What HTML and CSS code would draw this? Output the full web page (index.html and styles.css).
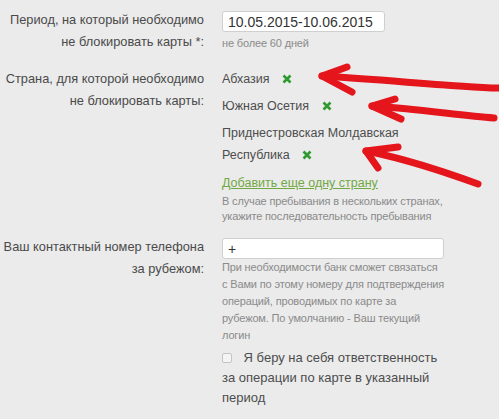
FILE: index.html
```html
<!DOCTYPE html>
<html lang="ru">
<head>
    <meta charset="UTF-8">
    <meta name="viewport" content="width=device-width, initial-scale=1.0">
    <title>Настройки блокировки карты</title>
    <link rel="stylesheet" href="styles.css">
</head>
<body>

    <main class="form">
        <!-- Period -->
        <div class="row row-period">
            <div class="label">Период, на который необходимо<br>не блокировать карты *:</div>
            <div class="field">
                <input class="text-input period-input" type="text" value="10.05.2015-10.06.2015">
                <div class="hint hint-short">не более 60 дней</div>
            </div>
        </div>

        <!-- Countries -->
        <div class="row row-countries">
            <div class="label">Страна, для которой необходимо<br>не блокировать карты:</div>
            <div class="field">
                <div class="country">Абхазия <span class="remove"><svg width="10" height="10" viewBox="0 0 10 10"><path d="M1.5 1.5 L8.5 8.5 M8.5 1.5 L1.5 8.5"/></svg></span></div>
                <div class="country">Южная Осетия <span class="remove"><svg width="10" height="10" viewBox="0 0 10 10"><path d="M1.5 1.5 L8.5 8.5 M8.5 1.5 L1.5 8.5"/></svg></span></div>
                <div class="country">Приднестровская Молдавская Республика <span class="remove"><svg width="10" height="10" viewBox="0 0 10 10"><path d="M1.5 1.5 L8.5 8.5 M8.5 1.5 L1.5 8.5"/></svg></span></div>
                <a class="add-link" href="#">Добавить еще одну страну</a>
                <div class="hint hint-countries">В случае пребывания в нескольких странах, укажите последовательность пребывания</div>
            </div>
        </div>

        <!-- Phone -->
        <div class="row row-phone">
            <div class="label">Ваш контактный номер телефона<br>за рубежом:</div>
            <div class="field">
                <input class="text-input phone-input" type="text" value="+">
                <div class="hint hint-phone">При необходимости банк сможет связаться с&nbsp;Вами по этому номеру для подтверждения операций, проводимых по карте за рубежом.&nbsp;По умолчанию - Ваш текущий логин</div>
            </div>
        </div>

        <!-- Agreement -->
        <div class="row row-agree">
            <div class="label"></div>
            <div class="field">
                <label class="agree"><input class="check" type="checkbox"> Я беру на себя ответственность за операции по карте в указанный период</label>
            </div>
        </div>
    </main>

    <!-- Red marker arrows drawn over the form -->
    <svg class="arrows" width="499" height="419" viewBox="0 0 499 419">
        <path d="M498 88 C 455 87, 390 80, 322 76"/>
        <path d="M347 67 L 322 76 L 352 92"/>
        <path d="M494 118 C 462 116, 420 109, 372 106"/>
        <path d="M395 99 L 372 106 L 401 119"/>
        <path d="M478 184 C 445 172, 402 158, 366 151"/>
        <path d="M398 147 L 366 151 L 378 168"/>
    </svg>

</body>
</html>
```

FILE: styles.css
```css
/* General Body Styling */
body {
    font-family: "Liberation Sans", Arial, sans-serif;
    background-color: #ebebeb;
    color: #4a4a4a;
    margin: 0;
    position: relative;
    width: 499px;
    height: 419px;
    overflow: hidden;
}

.form {
    padding-top: 9px;
}

/* Form rows */
.row {
    display: grid;
    grid-template-columns: 204px 230px;
    column-gap: 18px;
    margin-bottom: 12px;
}

.row-period {
    margin-bottom: 15px;
}

.row-phone {
    margin-bottom: 4px;
}

.label {
    text-align: right;
    font-size: 12.8px;
    line-height: 22px;
    color: #4a4a4a;
}

/* Inputs */
.text-input {
    display: block;
    box-sizing: border-box;
    height: 21px;
    margin: 2px 0 0;
    padding: 0 5px;
    border: 1px solid #cfcfcf;
    border-radius: 3px;
    background-color: #fff;
    font-family: "Liberation Sans", Arial, sans-serif;
    font-size: 14px;
    color: #333;
}

.period-input {
    width: 163px;
}

.phone-input {
    width: 222px;
}

/* Hints */
.hint {
    font-size: 11px;
    letter-spacing: -0.15px;
    color: #8a8a8a;
}

.hint-short {
    margin-top: 3px;
    line-height: 16px;
}

.hint-countries {
    line-height: 15px;
}

.hint-phone {
    max-width: 226px;
    line-height: 17px;
}

/* Countries */
.country {
    max-width: 190px;
    font-size: 12.5px;
    line-height: 22px;
    margin-bottom: 4px;
    color: #4d4d4d;
}

.remove {
    display: inline-block;
    margin-left: 9px;
    vertical-align: -1px;
}

.remove svg path {
    stroke: #2f9a2f;
    stroke-width: 2.6;
    fill: none;
}

.add-link {
    display: block;
    margin-top: 5px;
    font-size: 12.5px;
    line-height: 22px;
    color: #72a843;
    text-decoration: underline;
}

/* Agreement checkbox */
.agree {
    display: block;
    font-size: 13px;
    line-height: 20px;
    color: #4d4d4d;
}

.check {
    appearance: none;
    -webkit-appearance: none;
    width: 10px;
    height: 10px;
    margin: 0 8px 0 0;
    border: 1px solid #c4c4c4;
    border-radius: 2px;
    background-color: #f4f4f4;
    vertical-align: -1px;
}

/* Red marker arrows */
.arrows {
    position: absolute;
    left: 0;
    top: 0;
    pointer-events: none;
}

.arrows path {
    fill: none;
    stroke: #e5151c;
    stroke-width: 7;
    stroke-linecap: round;
    stroke-linejoin: round;
}
```
